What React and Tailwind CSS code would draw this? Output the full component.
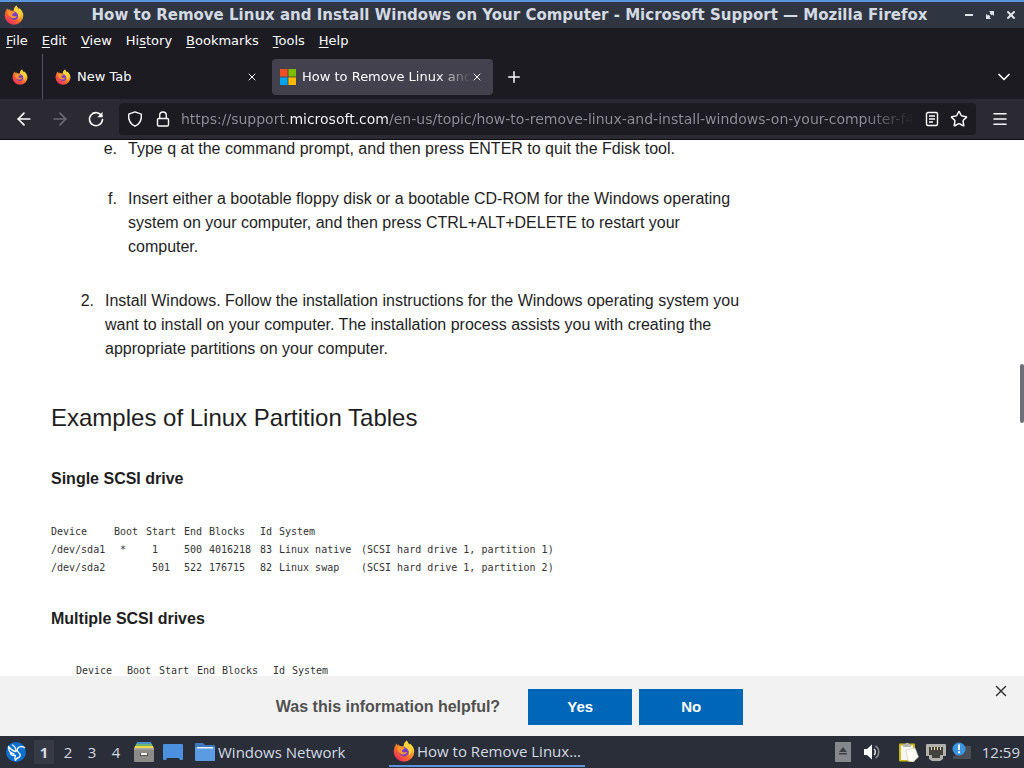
import React, { useState } from 'react';
import { ArrowLeft, ArrowRight, ChevronDown, Menu, Plus, Star, X } from 'lucide-react';

const menus = [
  ['', 'F', 'ile'],
  ['', 'E', 'dit'],
  ['', 'V', 'iew'],
  ['Hi', 's', 'tory'],
  ['', 'B', 'ookmarks'],
  ['', 'T', 'ools'],
  ['', 'H', 'elp'],
];

const singleDrive = [
  ['/dev/sda1', '\u00a0*', '\u00a01', '500', '4016218', '83', 'Linux native', '(SCSI hard drive 1, partition 1)'],
  ['/dev/sda2', '', '\u00a0501', '522', '176715', '82', 'Linux swap', '(SCSI hard drive 1, partition 2)'],
];

const FirefoxLogo = ({ className }) => (
  <svg viewBox="0 0 24 24" className={className} aria-hidden="true">
    <defs>
      <linearGradient id="ffFlame" x1="0.85" y1="0.1" x2="0.2" y2="0.95">
        <stop offset="0" stopColor="#fff04a" />
        <stop offset="0.3" stopColor="#ffb02e" />
        <stop offset="0.6" stopColor="#ff6a2b" />
        <stop offset="1" stopColor="#ee2a62" />
      </linearGradient>
    </defs>
    <path
      fill="url(#ffFlame)"
      d="M15.2.6c.3 2.1 1.5 3.2 2.7 4.5l.5-1.2c3 2.2 4.8 5.3 4.8 9A11.2 11 0 0 1 12 23.6 11.2 11 0 0 1 .8 12.8c0-3.8 1.5-6.9 3.3-8.9l.6 2.3 1.7-1.7.7 2.1c1.7-.2 3.2.2 4.4.7C11.8 4.5 13 2 15.2.6z"
    />
    <circle cx="12" cy="12.8" r="5.2" fill="#7a3fc4" />
    <path fill="#ff9630" d="M4 8.500c2-1.800 4.600-1.800 6.800-.9 1 .5 2 .9 2 1.500 0 .9-2.600 1-3 2.400-.3 1.300.9 2.200 2.300 2 1.500-.1 2.200-.6 3.300-.3-.8 2.200-3.600 3.300-6 2.300-3-1.200-4.500-4-5.400-7z" />
    <path fill="#ffd23c" d="M15.2.6c.4 3.2 4.8 4.8 5 9.600.2 3.200-1 5.300-2.900 6.800.7-3.400.2-6.200-2.500-8.100-1.600-1.100-2.800-1.500-3.200-2.200.2-2.200 1.400-4.700 3.600-6.100z" />
  </svg>
);

const MicrosoftLogo = () => (
  <svg viewBox="0 0 16 16" className="h-4 w-4 shrink-0" aria-hidden="true">
    <path fill="#f25022" d="M0 0h7.600v7.600H0z" />
    <path fill="#7fba00" d="M8.400 0H16v7.600H8.400z" />
    <path fill="#00a4ef" d="M0 8.400h7.600V16H0z" />
    <path fill="#ffb900" d="M8.400 8.400H16V16H8.400z" />
  </svg>
);

const TitleBar = () => (
  <header className="flex h-7 shrink-0 items-center border-t-2 border-[#5b94dc] bg-[#2f3541] px-1">
    <FirefoxLogo className="h-5 w-5 shrink-0" />
    <h1 className="min-w-0 flex-1 truncate pl-8 text-center text-[15px] font-bold text-[#d3dae3]">
      How to Remove Linux and Install Windows on Your Computer - Microsoft Support — Mozilla Firefox
    </h1>
    <div className="flex items-center gap-[9px] pr-[3px] text-[#dfe3ea]">
      <button type="button" aria-label="Minimize" className="flex h-3 w-3 items-center justify-center">
        <svg viewBox="0 0 12 12" className="h-3 w-3"><path fill="currentColor" d="M2 5h8v2H2z" /></svg>
      </button>
      <button type="button" aria-label="Restore" className="flex h-3 w-3 items-center justify-center">
        <svg viewBox="0 0 12 12" className="h-3 w-3">
          <path fill="currentColor" d="M5 2h5v5L8.300 5.500 7.500 6.300 5.700 4.500l.8-.8zM2 5l1.700 1.500.8-.8 1.800 1.800-.8.8L7 10H2z" />
        </svg>
      </button>
      <button type="button" aria-label="Close window" className="flex h-3 w-3 items-center justify-center">
        <X className="h-3 w-3" strokeWidth={4} />
      </button>
    </div>
  </header>
);

const MenuBar = () => (
  <nav aria-label="Menu" className="flex h-[26px] shrink-0 items-center gap-3.5 px-1.5 text-[13px]">
    {menus.map(([before, key, after]) => (
      <button key={before + key + after} type="button">
        {before}<span className="underline underline-offset-2">{key}</span>{after}
      </button>
    ))}
  </nav>
);

const TabBar = () => (
  <div className="flex h-[45px] shrink-0 items-center text-[13px]">
    <button type="button" aria-label="Pinned tab" className="flex h-full w-[43px] items-center border-r border-[#55545e] pl-3">
      <FirefoxLogo className="h-4 w-4" />
    </button>
    <div className="flex h-9 w-[229px] items-center pl-3 pr-3.5">
      <button type="button" className="flex flex-1 items-center gap-1.5">
        <FirefoxLogo className="h-4 w-4" />
        New Tab
      </button>
      <button type="button" aria-label="Close New Tab"><X className="h-3 w-3" strokeWidth={2} /></button>
    </div>
    <div className="flex h-9 w-[221px] items-center rounded bg-[#42414d] pl-2 pr-2.5">
      <button type="button" className="flex min-w-0 flex-1 items-center gap-1.5">
        <MicrosoftLogo />
        <span className="min-w-0 flex-1 overflow-hidden whitespace-nowrap text-left [mask-image:linear-gradient(90deg,#000_80%,transparent)]">
          How to Remove Linux and
        </span>
      </button>
      <button type="button" aria-label="Close tab"><X className="h-3 w-3" strokeWidth={2} /></button>
    </div>
    <button type="button" aria-label="Open a new tab" className="ml-3"><Plus className="h-[18px] w-[18px]" strokeWidth={2} /></button>
    <button type="button" aria-label="List all tabs" className="ml-auto mr-2.5"><ChevronDown className="h-5 w-5" strokeWidth={2} /></button>
  </div>
);

const AddressBar = () => {
  const [url, setUrl] = useState(
    'https://support.microsoft.com/en-us/topic/how-to-remove-linux-and-install-windows-on-your-computer-f489c550'
  );

  return (
    <div className="flex h-[41px] shrink-0 items-center border-b border-[#0c0c0f] bg-[#2b2a33]">
      <div className="flex w-[119px] shrink-0 items-center gap-4 pl-3.5">
        <button type="button" aria-label="Back"><ArrowLeft className="h-5 w-5" strokeWidth={2} /></button>
        <button type="button" aria-label="Forward" className="text-[#6b6a73]"><ArrowRight className="h-5 w-5" strokeWidth={2} /></button>
        <button type="button" aria-label="Reload">
          <svg viewBox="0 0 20 20" className="h-5 w-5" fill="none" stroke="currentColor" strokeWidth="1.6" strokeLinecap="round">
            <path d="M15.800 7.200a6.500 6.500 0 1 0 .7 3.300" />
            <path d="M16.500 3v5.200h-5.200z" fill="currentColor" stroke="none" />
          </svg>
        </button>
      </div>
      <div className="flex h-8 min-w-0 flex-1 items-center rounded bg-[#1c1b22] px-2">
        <button type="button" aria-label="Tracking protection">
          <svg viewBox="0 0 16 16" className="h-4 w-4" fill="none" stroke="currentColor" strokeWidth="1.4" strokeLinejoin="round">
            <path d="M8 .9l6.300 2.300c.5 5.600-1.600 9.900-6.300 12C3.300 13.100 1.200 8.800 1.700 3.200z" />
          </svg>
        </button>
        <button type="button" aria-label="Site information" className="ml-3">
          <svg viewBox="0 0 16 16" className="h-4 w-4" fill="none" stroke="currentColor" strokeWidth="1.4" strokeLinejoin="round">
            <rect x="2.5" y="7.5" width="11" height="7.5" rx="1.2" />
            <path d="M4.700 7.500V4.300a3.300 3.300 0 0 1 6.600 0v3.200" />
          </svg>
        </button>
        <input
          type="text"
          aria-label="Address"
          spellCheck={false}
          value={url}
          onChange={e => setUrl(e.target.value)}
          className="ml-2.5 h-8 min-w-0 flex-1 bg-[linear-gradient(90deg,#8f8f98_108px,#fbfbfe_108px,#fbfbfe_207px,#8f8f98_207px,#8f8f98_calc(100%-50px),transparent)] bg-clip-text text-[14px] text-transparent outline-none"
        />
        <button type="button" aria-label="Reader view" className="ml-2.5">
          <svg viewBox="0 0 16 16" className="h-4 w-4" fill="none" stroke="currentColor" strokeWidth="1.4">
            <rect x="2.5" y="1.500" width="11" height="13" rx="1.5" />
            <path d="M5 5h6M5 8h6M5 11h4" />
          </svg>
        </button>
        <button type="button" aria-label="Bookmark this page" className="ml-2.5"><Star className="h-[18px] w-[18px]" strokeWidth={2} /></button>
      </div>
      <button type="button" aria-label="Open application menu" className="mx-[15px]"><Menu className="h-[18px] w-[18px]" strokeWidth={2} /></button>
    </div>
  );
};

const PartitionTable = ({ rows, className, deviceWidth = 'w-[63px]' }) => (
  <table className={`table-fixed whitespace-nowrap text-left font-['DejaVu_Sans_Mono',monospace] text-[10px] leading-[18px] text-[#333333] ${className}`}>
    <colgroup>
      <col className={deviceWidth} />
      <col className="w-8" />
      <col className="w-[38px]" />
      <col className="w-[25px]" />
      <col className="w-[51px]" />
      <col className="w-[19px]" />
      <col className="w-[82px]" />
      <col className="w-[204px]" />
    </colgroup>
    <thead>
      <tr>
        {['Device', 'Boot', 'Start', 'End', 'Blocks', 'Id', 'System'].map(h => (
          <th key={h} className="p-0 font-normal">{h}</th>
        ))}
      </tr>
    </thead>
    <tbody>
      {rows.map(row => (
        <tr key={row[0]}>
          {row.map((cell, i) => <td key={i} className="p-0">{cell}</td>)}
        </tr>
      ))}
    </tbody>
  </table>
);

const Article = () => (
  <main className="relative min-h-0 flex-1 overflow-hidden bg-white pl-[51px] font-['Liberation_Sans',sans-serif] text-[16px] leading-6 text-[#1e1e1e]">
    <div className="-mt-[3px] max-w-[694px]">
      <ol>
        <li>
          <ol>
            <li className="flex gap-[11px]">
              <span className="w-[66px] shrink-0 text-right">e.</span>
              <p>Type q at the command prompt, and then press ENTER to quit the Fdisk tool.</p>
            </li>
            <li className="mt-[26px] flex gap-[11px]">
              <span className="w-[66px] shrink-0 text-right">f.</span>
              <p>
                Insert either a bootable floppy disk or a bootable CD-ROM for the Windows operating system on your
                computer, and then press CTRL+ALT+DELETE to restart your computer.
              </p>
            </li>
          </ol>
        </li>
        <li className="mt-[30px] flex gap-[11px]">
          <span className="w-[43px] shrink-0 text-right">2.</span>
          <p>
            Install Windows. Follow the installation instructions for the Windows operating system you want to install
            on your computer. The installation process assists you with creating the appropriate partitions on your
            computer.
          </p>
        </li>
      </ol>
      <h2 className="mt-[41px] text-[24px] leading-8">Examples of Linux Partition Tables</h2>
      <h3 className="mt-[33px] font-bold">Single SCSI drive</h3>
      <PartitionTable rows={singleDrive} className="mt-8 w-[514px]" />
      <h3 className="mt-[30px] font-bold">Multiple SCSI drives</h3>
      <PartitionTable rows={[]} deviceWidth="w-[51px]" className="ml-[25px] mt-[31px] w-[502px]" />
    </div>
    <div className="absolute right-0 top-56 h-[59px] w-1 rounded-full bg-[#6f6f78]" />
  </main>
);

const FeedbackBar = () => {
  const [open, setOpen] = useState(true);
  if (!open) return null;

  return (
    <section className="relative flex h-[60px] shrink-0 items-center justify-center bg-[#f2f2f2] pl-px pr-1.5 pt-0.5 font-['Liberation_Sans',sans-serif]">
      <p className="mr-7 text-[16px] font-bold text-[#505050]">Was this information helpful?</p>
      <div className="flex gap-[7px] text-[15px] font-bold text-white">
        <button type="button" className="h-9 w-[104px] bg-[#0067b8]">Yes</button>
        <button type="button" className="h-9 w-[104px] bg-[#0067b8]">No</button>
      </div>
      <button type="button" aria-label="Close" onClick={() => setOpen(false)} className="absolute right-3.5 top-1.5 text-[#333333]">
        <X className="h-[18px] w-[18px]" strokeWidth={2} />
      </button>
    </section>
  );
};

const Taskbar = () => (
  <footer className="flex h-8 shrink-0 items-center bg-[#2a2e39] font-['Open_Sans',sans-serif] text-[15px] text-[#d3dae3]">
    <button type="button" aria-label="Applications" className="ml-1.5">
      <svg viewBox="0 0 20 20" className="h-5 w-5">
        <circle cx="10" cy="10" r="10" fill="#0b6fd0" />
        <path d="M2.500 4.500C4 6.500 7 9 10 9.500M2.500 4.500C2.200 8 4 11 8 12M4.500 11.200c.5 1.500 2 2.500 4.500 2.300M6.500 3C8.500 4 9.700 6.500 10.300 9" fill="none" stroke="#fff" strokeWidth="1.3" strokeLinecap="round" />
        <path d="M18.500 5.500c-2.500-1.600-5.700-1-7 1.200-1 1.900.5 3.600 2.200 5 1.200 1.300.4 3.500-2 4.300-1 .4-1.700 1-2.200 2.200" fill="none" stroke="#fff" strokeWidth="1.4" strokeLinecap="round" />
        <path d="M9.500 13.500c-.8 1.500-.8 3-.3 4.500" fill="none" stroke="#fff" strokeWidth="1.2" strokeLinecap="round" />
      </svg>
    </button>
    <div className="ml-2 flex items-center">
      <button type="button" className="mr-1 h-6 w-5 bg-[#363a45] font-bold">1</button>
      <button type="button" className="mr-1 h-6 w-5">2</button>
      <button type="button" className="mr-1 h-6 w-5">3</button>
      <button type="button" className="mr-1 h-6 w-5">4</button>
    </div>
    <button type="button" aria-label="Files" className="ml-1">
      <svg viewBox="0 0 20 20" className="h-5 w-5">
        <path fill="#4a90c8" d="M3 0h14l1 3H2z" />
        <path fill="#69b36a" d="M2 2h16l1 3H1z" />
        <path fill="#f3d34a" d="M1 4h18l1 3H0z" />
        <rect y="6" width="20" height="14" rx="1" fill="#8c8b87" />
        <rect y="6" width="20" height="1.5" fill="#a8a7a3" />
        <path fill="#55544f" d="M6 11h8v3H6z" />
        <path fill="#fff" d="M7 11h6v2H7z" />
      </svg>
    </button>
    <button type="button" aria-label="Show desktop" className="ml-[9px]">
      <svg viewBox="0 0 20 20" className="h-5 w-5">
        <rect y="2" width="20" height="16" rx="1" fill="#4b91e0" />
        <path fill="#2a2e39" d="M3 18l1-2h12l1 2z" />
      </svg>
    </button>
    <button type="button" className="ml-3 flex w-[190px] items-center gap-[3px]">
      <svg viewBox="0 0 20 20" className="h-5 w-5">
        <path fill="#3d78bd" d="M0 2a1 1 0 0 1 1-1h7l2 2h9a1 1 0 0 1 1 1v6H0z" />
        <path fill="#5b9be3" d="M0 5h20v13a1 1 0 0 1-1 1H1a1 1 0 0 1-1-1z" />
        <path fill="#eef4fb" d="M2 5h16v1.500H2z" />
      </svg>
      Windows Network
    </button>
    <button type="button" className="ml-1 flex h-[30px] w-[196px] items-center gap-0.5 border-b-2 border-[#5b94dc] pl-1">
      <FirefoxLogo className="h-[22px] w-[22px] shrink-0" />
      How to Remove Linux…
    </button>
    <div className="ml-auto flex items-center pr-1">
      <button type="button" aria-label="Removable media">
        <svg viewBox="0 0 16 20" className="h-5 w-4">
          <rect width="16" height="20" fill="#85878c" />
          <path fill="#3d4048" d="M8 5l4 5H4zM4 11h8v1.500H4z" />
        </svg>
      </button>
      <button type="button" aria-label="Volume" className="ml-3">
        <svg viewBox="0 0 18 18" className="h-[18px] w-[18px]">
          <path fill="#fff" d="M1 6h3l5-4.500v15L4 12H1z" />
          <path fill="none" stroke="#dde0e5" strokeWidth="1.5" d="M11 6a4 4 0 0 1 0 6" />
          <path fill="none" stroke="#85878c" strokeWidth="1.5" d="M12.500 2.800a7.500 7.500 0 0 1 0 12.400" />
        </svg>
      </button>
      <button type="button" aria-label="Clipboard" className="ml-[18px]">
        <svg viewBox="0 0 20 20" className="h-5 w-5">
          <rect y="1.500" width="16" height="18" rx="1" fill="#c9b91e" />
          <path fill="#f7f7f2" d="M2 3.500h12V18H2z" />
          <path fill="#b5b5b0" d="M4 2h2.500a1.800 1.800 0 0 1 3.400 0H12v3H4z" />
          <path fill="#fdfdf6" stroke="#c9cbbd" strokeWidth=".6" d="M7 8l9-2 3.500 9-5.500 5-5-1z" />
        </svg>
      </button>
      <button type="button" aria-label="Network" className="ml-[7px]">
        <svg viewBox="0 0 20 20" className="h-5 w-5">
          <path fill="#b2b0aa" d="M1 2h18a1 1 0 0 1 1 1v11h-3v3l-3 2H6l-3-2v-3H0V3a1 1 0 0 1 1-1z" />
          <path fill="#45423d" d="M3 5h14v8h-3v3H6v-3H3z" />
          <path stroke="#e5dfae" strokeWidth="1" d="M5.500 5v3M8.500 5v3M11.500 5v3M14.500 5v3" />
        </svg>
      </button>
      <button type="button" aria-label="Updates" className="ml-1.5">
        <svg viewBox="0 0 20 20" className="h-5 w-5">
          <path fill="#4a4d55" d="M3 4h16v13H1v-3h2z" />
          <circle cx="7" cy="7" r="6.5" fill="#3b94e0" />
          <path fill="#fff" d="M6 2.500h2V8H6zM6 9.300h2v2H6z" />
        </svg>
      </button>
      <time className="ml-2.5">12:59</time>
    </div>
  </footer>
);

export default function App() {
  return (
    <div className="flex h-screen flex-col overflow-hidden bg-[#1c1b22] font-['DejaVu_Sans',sans-serif] text-[#fbfbfe]">
      <TitleBar />
      <MenuBar />
      <TabBar />
      <AddressBar />
      <Article />
      <FeedbackBar />
      <Taskbar />
    </div>
  );
}
